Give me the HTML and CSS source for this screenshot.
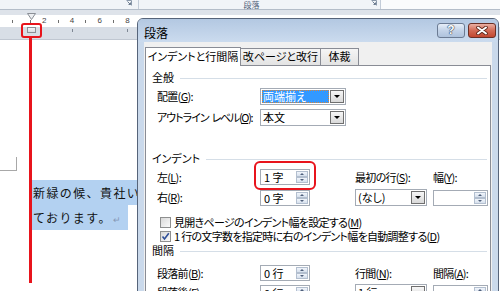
FILE: index.html
```html
<!DOCTYPE html>
<html lang="ja">
<head>
<meta charset="utf-8">
<title>段落</title>
<link rel="stylesheet" href="styles.css">
</head>
<body>
<div class="screen">
  <div class="ribbon">
    <div class="rgroup g1">
      <svg class="launcher" width="6" height="6" viewBox="0 0 6 6"><path d="M0.5 0.5H5.5V5.5" fill="none" stroke="#8a98aa"/><path d="M1.5 1.5L4.5 4.5M2.5 4.5H4.5V2.5" fill="none" stroke="#6d7c90"/></svg>
    </div>
    <div class="rgroup g2">
      <span class="glabel">段落</span>
      <svg class="launcher" width="6" height="6" viewBox="0 0 6 6"><path d="M0.5 0.5H5.5V5.5" fill="none" stroke="#8a98aa"/><path d="M1.5 1.5L4.5 4.5M2.5 4.5H4.5V2.5" fill="none" stroke="#6d7c90"/></svg>
    </div>
    <div class="rgroup g3"></div>
  </div>
  <div class="bar"></div>
  <div class="ruler">
    <span class="rc first"><i class="tk"></i></span>
    <span class="rc"><i class="tk"></i></span>
    <span class="rc">2</span>
    <span class="rc"><i class="tk"></i></span>
    <span class="rc">4</span>
    <span class="rc"><i class="tk"></i></span>
    <span class="rc">6</span>
    <span class="rc"><i class="tk"></i></span>
    <span class="rc">8</span>
    <span class="rc"><i class="tk"></i></span>
  </div>
  <div class="ruler-low">
    <i class="ts ts1"></i><i class="ts ts2"></i>
  </div>
  <div class="page">
    <div class="cropmark"></div>
    <div class="doc">
      <div class="line l1">新緑の候、貴社い</div>
      <div class="line l2">ております。<span class="ret">↵</span></div>
    </div>
  </div>

  <svg class="first-indent" width="9" height="7" viewBox="0 0 9 7"><path d="M0.5 0.5H8.5L4.5 6.5Z" fill="#eceef1" stroke="#8b8f96"/></svg>
  <div class="left-indent"></div>
  <div class="mark-ruler"></div>
  <div class="mark-line"></div>

  <div class="dialog">
    <div class="titlebar">
      <span class="title">段落</span>
      <span class="tbtn help">?</span>
      <span class="tbtn close"><svg width="12" height="9" viewBox="0 0 12 9"><path d="M2 1.5L10 7.5M10 1.5L2 7.5" stroke="#5b2418" stroke-width="3.6" stroke-linecap="round"/><path d="M2 1.5L10 7.5M10 1.5L2 7.5" stroke="#fff" stroke-width="2" stroke-linecap="round"/></svg></span>
    </div>
    <div class="client">
      <div class="tabs">
        <span class="tab sel">インデントと行間隔</span>
        <span class="tab t2">改ページと改行</span>
        <span class="tab t3">体裁</span>
      </div>
      <div class="panel">
        <div class="sec s-gen">全般</div>
        <div class="grid g-gen">
          <span class="lbl">配置(<u>G</u>):</span>
          <span class="combo w86 focus"><span class="val"><span class="hl">両端揃え</span></span><span class="dd"><i class="tri"></i></span></span>
          <span class="lbl narrow">アウトライン<span class="sp">レベル(<u>O</u>):</span></span>
          <span class="combo w86"><span class="val">本文</span><span class="dd"><i class="tri"></i></span></span>
        </div>

        <div class="sec s-ind">インデント</div>
        <div class="grid g-ind">
          <span class="lbl">左(<u>L</u>):</span>
          <span class="spin w50"><span class="val">1 字</span><span class="arrows"><span><i class="up"></i></span><span><i class="dn"></i></span></span></span>
          <span class="lbl">最初の行(<u>S</u>):</span>
          <span class="lbl">幅(<u>Y</u>):</span>
          <span class="lbl">右(<u>R</u>):</span>
          <span class="spin w50"><span class="val">0 字</span><span class="arrows"><span><i class="up"></i></span><span><i class="dn"></i></span></span></span>
          <span class="combo w72"><span class="val">(なし)</span><span class="dd"><i class="tri"></i></span></span>
          <span class="spin w55"><span class="val"></span><span class="arrows"><span><i class="up"></i></span><span><i class="dn"></i></span></span></span>
        </div>
        <div class="chk c1"><span class="cb"></span><span class="ct">見開きページのインデント幅を設定する(<u>M</u>)</span></div>
        <div class="chk c2"><span class="cb on"><svg width="9" height="9" viewBox="0 0 9 9"><path d="M1.5 4.5L3.5 7L7.8 1.2" fill="none" stroke="#2f4f98" stroke-width="1.6"/></svg></span><span class="ct">1 行の文字数を指定時に右のインデント幅を自動調整する(<u>D</u>)</span></div>

        <div class="sec s-sp">間隔</div>
        <div class="grid g-sp">
          <span class="lbl">段落前(<u>B</u>):</span>
          <span class="spin w50"><span class="val">0 行</span><span class="arrows"><span><i class="up"></i></span><span><i class="dn"></i></span></span></span>
          <span class="lbl">行間(<u>N</u>):</span>
          <span class="lbl">間隔(<u>A</u>):</span>
          <span class="lbl">段落後(<u>F</u>):</span>
          <span class="spin w50"><span class="val">0 行</span><span class="arrows"><span><i class="up"></i></span><span><i class="dn"></i></span></span></span>
          <span class="combo w72"><span class="val">1 行</span><span class="dd"><i class="tri"></i></span></span>
          <span class="spin w55"><span class="val"></span><span class="arrows"><span><i class="up"></i></span><span><i class="dn"></i></span></span></span>
        </div>
      </div>
    </div>
  </div>

  <div class="mark-spin"></div>
</div>
</body>
</html>
```

FILE: styles.css
```css
* { box-sizing: border-box; margin: 0; padding: 0; }
html, body { width: 500px; height: 291px; overflow: hidden; background: #fff; }
body { font-family: "Noto Sans CJK JP", "Noto Sans", sans-serif; font-size: 11px; color: #000; }
u { text-decoration: underline; text-underline-offset: 1px; }

.screen { position: relative; width: 500px; height: 291px; overflow: hidden; display: flex; flex-direction: column; }

/* ribbon strip */
.ribbon { flex: none; height: 10px; display: flex; background: #f1f4f8; border-bottom: 1px solid #b4bdc9; }
.rgroup { height: 9px; display: flex; align-items: flex-start; }
.g1 { width: 139px; justify-content: flex-end; padding-right: 6px; border-right: 1px solid #c3ccd8; }
.g2 { width: 242px; padding-right: 3px; border-right: 1px solid #c3ccd8; }
.g3 { flex: 1; background: #fafbfc; }
.glabel { flex: 1; text-align: center; padding-right: 7px; font-size: 8px; line-height: 9px; color: #51627a; }
.launcher { display: block; margin-top: 0; }

.bar { flex: none; height: 5px; background: #dee3ea; }

/* ruler */
.ruler { flex: none; height: 12px; display: flex; align-items: center; padding-left: 9.5px; background: #fff; font-family: "Liberation Sans", sans-serif; font-size: 8px; line-height: 12px; color: #454545; }
.rc { width: 13.9px; flex: none; display: flex; justify-content: center; align-items: center; }
.rc.first { justify-content: flex-start; padding-left: 2px; }
.tk { display: block; width: 1px; height: 3px; background: #6f6f6f; }
.ruler-low { flex: none; height: 13px; display: flex; align-items: flex-start; background: #d8dee6; border-bottom: 1px solid #c0c7d1; }
.ts { display: block; width: 1px; height: 3px; margin-top: 2px; background: #7e8793; }
.ts1 { margin-left: 72px; }
.ts2 { margin-left: 54px; }

/* page */
.page { flex: 1; background: #fff; }
.cropmark { width: 17px; height: 14px; margin-top: 117px; border-right: 1px solid #a8a8a8; border-bottom: 1px solid #a8a8a8; }
.doc { margin-top: 9px; padding-left: 32px; font-size: 12px; letter-spacing: 1.4px; color: #111; }
.line { height: 25px; line-height: 25px; background: #b3d1f1; white-space: nowrap; padding-left: 1px; }
.l1 { width: 112px; }
.l2 { width: 96px; }
.ret { font-size: 9px; color: #8698b6; letter-spacing: 0; margin-left: 1px; }

/* ruler markers & annotations */
.first-indent { position: absolute; left: 27px; top: 13px; }
.left-indent { position: absolute; left: 27px; top: 27px; width: 9px; height: 6px; border: 1px solid #8b8f96; background: linear-gradient(#f4f5f7, #d9dce1); }
.mark-ruler { position: absolute; left: 21px; top: 23px; width: 21px; height: 15px; border: 2px solid #e8141c; border-radius: 3px; }
.mark-line { position: absolute; left: 29px; top: 37px; width: 3px; height: 246px; background: #e8141c; }
.mark-spin { position: absolute; left: 254px; top: 161px; width: 62px; height: 29px; border: 2px solid #e8141c; border-radius: 6px; }

/* dialog */
.dialog { position: absolute; left: 137px; top: 18px; width: 362px; height: 290px; border: 1px solid #56647a; border-radius: 6px 6px 0 0; background: #cad9eb; display: flex; flex-direction: column; }
.titlebar { flex: none; height: 23px; display: flex; align-items: flex-start; padding: 4px 2px 0 6px; background: linear-gradient(#b3c8e2, #cbdbee); border-radius: 5px 5px 0 0; }
.title { flex: 1; font-size: 12px; line-height: 15px; margin-top: 2px; color: #000; }
.tbtn { width: 28px; height: 15px; margin-left: 3px; border-radius: 3px; display: flex; align-items: center; justify-content: center; }
.help { border: 1px solid #6b7b93; background: linear-gradient(#e6eef8, #c3d3e8 50%, #aec2dc); font-family: "Liberation Sans", sans-serif; font-weight: bold; font-size: 12px; line-height: 13px; color: #fff; text-shadow: 0 0 1px #2b3a55, 0 0 1px #2b3a55, 0 0 1px #2b3a55; }
.close { border: 1px solid #6a2f25; background: linear-gradient(#eab0a3, #d26a55 50%, #c2472f); }

.client { flex: 1; margin: 0 6px; background: #f0f0f0; padding: 5px 1px 0 1px; display: flex; flex-direction: column; }
.tabs { flex: none; height: 18px; display: flex; align-items: flex-end; position: relative; z-index: 1; }
.tab { height: 17px; border: 1px solid #898c95; border-bottom: none; background: linear-gradient(#f5f5f5, #e3e3e3); text-align: center; font-size: 11px; line-height: 15px; font-feature-settings: "palt"; margin-left: -1px; white-space: nowrap; }
.tab.sel { width: 96px; height: 19px; margin-left: 0; margin-bottom: -1px; background: #fff; line-height: 17px; }
.t2 { width: 81px; }
.t3 { width: 39px; }

.panel { flex: 1; background: #fff; border: 1px solid #898c95; padding: 0 1px 0 6px; font-feature-settings: "palt"; letter-spacing: -0.7px; }
.sec { display: flex; align-items: center; gap: 6px; height: 12px; line-height: 12px; letter-spacing: 0; }
.sec::after { content: ""; flex: 1; height: 1px; margin-top: 2px; margin-right: 2px; background: #d5dee7; }
.s-gen { margin-top: 5px; }
.s-ind { margin-top: 26px; }
.s-sp { margin-top: 2px; }

.grid { display: grid; grid-template-columns: 103px 95px 78px 55px; align-items: center; padding-left: 5px; }
.g-gen { margin-top: 5px; grid-template-rows: 17px 17px; row-gap: 4px; }
.g-gen .combo { grid-column: 2 / 5; }
.g-ind { margin-top: 5px; grid-template-rows: 16px 17px; row-gap: 4px; }
.g-sp { margin-top: 9px; grid-template-rows: 16px 17px; row-gap: 3px; }
.lbl { line-height: 13px; white-space: nowrap; }
.lbl.narrow { letter-spacing: -1px; }
.sp { margin-left: 3px; letter-spacing: -1.3px; }

.combo { display: flex; height: 17px; border: 1px solid #a4abb5; background: #fff; letter-spacing: 0; }
.combo .val { flex: 1; padding: 1px 0 1px 1px; line-height: 13px; display: flex; }
.combo .val:not(:has(.hl)) { padding-left: 2px; }
.hl { flex: 1; background: #3399ff; color: #fff; padding-left: 1px; outline: 1px dotted #d9843a; outline-offset: -1px; line-height: 13px; }
.dd { width: 14px; margin: 1px; border: 1px solid #6f6f6f; background: linear-gradient(#f6f6f6, #d9d9d9); display: flex; align-items: center; justify-content: center; }
.tri { display: block; width: 0; height: 0; border-left: 3px solid transparent; border-right: 3px solid transparent; border-top: 3px solid #000; }
.w86 { width: 86px; }
.w72 { width: 72px; }
.w50 { width: 50px; }
.w55 { width: 55px; }

.spin { display: flex; height: 16px; border: 1px solid #a4abb5; background: #fff; letter-spacing: 0; }
.spin .val { flex: 1; padding-left: 3px; line-height: 14px; white-space: nowrap; }
.arrows { width: 14px; display: flex; flex-direction: column; padding: 1px; }
.arrows > span { flex: 1; border: 1px solid #b3bfcf; background: linear-gradient(#f1f5fb, #d6e0ed); display: flex; align-items: center; justify-content: center; }
.up { display: block; width: 0; height: 0; border-left: 2.5px solid transparent; border-right: 2.5px solid transparent; border-bottom: 2.5px solid #4e5f7b; }
.dn { display: block; width: 0; height: 0; border-left: 2.5px solid transparent; border-right: 2.5px solid transparent; border-top: 2.5px solid #4e5f7b; }

.chk { display: flex; align-items: center; gap: 3px; padding-left: 8px; height: 12px; line-height: 12px; white-space: nowrap; }
.ct { display: block; height: 12px; line-height: 12px; }
.c1 { margin-top: 10px; }
.c2 { margin-top: 2px; }
.cb { width: 11px; height: 11px; border: 1px solid #8e8f8f; background: linear-gradient(135deg, #d9d9d9, #fafafa); display: flex; align-items: center; justify-content: center; }
.cb svg { display: block; }
```
